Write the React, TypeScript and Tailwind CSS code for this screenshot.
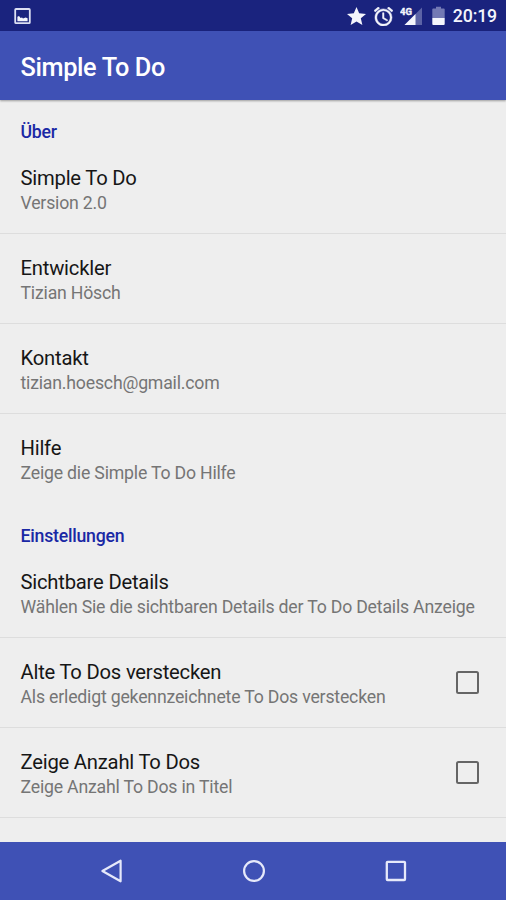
import { useState } from 'react'

interface Preference {
  title: string
  summary: string
  checkable?: boolean
}

interface Category {
  name: string
  items: Preference[]
}

const categories: Category[] = [
  {
    name: 'Über',
    items: [
      { title: 'Simple To Do', summary: 'Version 2.0' },
      { title: 'Entwickler', summary: 'Tizian Hösch' },
      { title: 'Kontakt', summary: 'tizian.hoesch@gmail.com' },
      { title: 'Hilfe', summary: 'Zeige die Simple To Do Hilfe' },
    ],
  },
  {
    name: 'Einstellungen',
    items: [
      { title: 'Sichtbare Details', summary: 'Wählen Sie die sichtbaren Details der To Do Details Anzeige' },
      { title: 'Alte To Dos verstecken', summary: 'Als erledigt gekennzeichnete To Dos verstecken', checkable: true },
      { title: 'Zeige Anzahl To Dos', summary: 'Zeige Anzahl To Dos in Titel', checkable: true },
    ],
  },
]

function StatusBar() {
  return (
    <div className="flex h-[31px] shrink-0 items-center bg-[#1a237e] pt-px pl-[14px] pr-[9px] text-[#f4f5fc]">
      <svg width="17" height="17" viewBox="0 0 17 17" fill="none">
        <rect x="1.2" y="1" width="14.6" height="14.2" rx="0.8" stroke="#dcdff3" strokeWidth="1.8" />
        <path d="M3.4 13.2V8.8L5 8l1.6 2 1.4-.4 1 .8 2.6-1 2 .8v3z" fill="currentColor" />
      </svg>
      <div className="ml-auto flex items-center">
        <svg width="19" height="19" viewBox="2 2 20 20" fill="currentColor">
          <path d="M12 17.27 18.18 21l-1.64-7.03L22 9.24l-7.19-.61L12 2 9.19 8.63 2 9.24l5.46 4.73L5.82 21z" />
        </svg>
        <svg className="ml-[8px]" width="19" height="19" viewBox="2 2 20 20" fill="currentColor" stroke="currentColor" strokeWidth="0.5">
          <path d="m22 5.72-4.6-3.86-1.29 1.53 4.6 3.86zM7.88 3.39 6.6 1.86 2 5.71l1.29 1.53zM12.5 8H11v6l4.75 2.85.75-1.23-4-2.37zM12 4c-4.97 0-9 4.03-9 9s4.02 9 9 9a9 9 0 0 0 0-18m0 16c-3.87 0-7-3.13-7-7s3.13-7 7-7 7 3.13 7 7-3.13 7-7 7" />
        </svg>
        <svg className="ml-[7px]" width="23" height="20" viewBox="0 0 23 20">
          <path d="M22 1.5V19H4.5z" fill="#5c63a6" />
          <path d="M15.5 8v11h-11z" fill="currentColor" />
          <text x="0" y="9" fontSize="9.5" fontWeight="700" fill="currentColor" stroke="currentColor" strokeWidth="0.4" textLength="12">4G</text>
        </svg>
        <svg className="ml-[9px]" width="13" height="20" viewBox="0 0 13 20">
          <path d="M1.2 2.4H4V.8h5v1.6h2.8q.9 0 .9.9V12H.3V3.3q0-.9.9-.9" fill="#7379b4" />
          <path d="M.3 12h12.4v6.1q0 .9-.9.9H1.2q-.9 0-.9-.9z" fill="currentColor" />
        </svg>
        <span className="ml-[8px] text-[17.7px] leading-[20px] font-medium tracking-[-0.15px]">20:19</span>
      </div>
    </div>
  )
}

function PreferenceRow({ item }: { item: Preference }) {
  const [checked, setChecked] = useState(false)

  return (
    <div className="flex h-[90px] items-center border-b border-[#dddddd] pl-[20.5px] pr-[27px] last:group-first:border-b-0">
      <div className="pt-[4px]">
        <div className="text-[20.24px] leading-[25px] tracking-[-0.22px] text-[#161616]">{item.title}</div>
        <div className="text-[17.7px] leading-[25px] tracking-[-0.2px] whitespace-nowrap text-[#757575]">{item.summary}</div>
      </div>
      {item.checkable && (
        <button
          role="checkbox"
          aria-checked={checked}
          aria-label={item.title}
          onClick={() => setChecked(!checked)}
          className={`ml-auto size-[23px] rounded-[2.5px] border-2 border-[#656565] ${checked ? 'bg-[#656565]' : ''}`}
        />
      )}
    </div>
  )
}

function NavigationBar() {
  return (
    <div className="flex h-[58px] shrink-0 items-center justify-between bg-[#3f51b5] pr-[99px] pl-[100px] text-[#e6e9fa]">
      <svg width="24" height="26" viewBox="0 0 24 26" fill="none" stroke="currentColor" strokeWidth="2.2" strokeLinejoin="round">
        <path d="M20.6 2.7v20.6L2.4 13z" />
      </svg>
      <svg width="24" height="24" viewBox="1 0 24 24" fill="none" stroke="currentColor" strokeWidth="2.2">
        <circle cx="12" cy="12" r="9.9" />
      </svg>
      <svg width="22" height="22" viewBox="0 0 22 22" fill="none" stroke="currentColor" strokeWidth="2.3">
        <rect x="1.8" y="1.8" width="18.2" height="18.2" rx="0.8" />
      </svg>
    </div>
  )
}

export default function App() {
  return (
    <div className="flex h-[900px] w-[506px] flex-col overflow-hidden bg-[#eeeeee] font-[Roboto,sans-serif]">
      <StatusBar />
      <header className="z-10 flex h-[69px] shrink-0 items-center bg-[#3f51b5] px-[20.5px] pt-[4px] shadow-[0_1px_2px_rgba(0,0,0,0.35)]">
        <h1 className="text-[25.3px] leading-[30px] font-medium tracking-[-0.37px] text-white">Simple To Do</h1>
      </header>
      <main className="min-h-0 flex-1 overflow-hidden">
        {categories.map(category => (
          <section key={category.name} className="group">
            <h2 className="flex h-[44px] items-center px-[20.5px] pt-[20px] text-[17.7px] leading-[24px] font-medium tracking-[-0.23px] text-[#1a28a5]">
              {category.name}
            </h2>
            {category.items.map(item => (
              <PreferenceRow key={item.title} item={item} />
            ))}
          </section>
        ))}
      </main>
      <NavigationBar />
    </div>
  )
}
